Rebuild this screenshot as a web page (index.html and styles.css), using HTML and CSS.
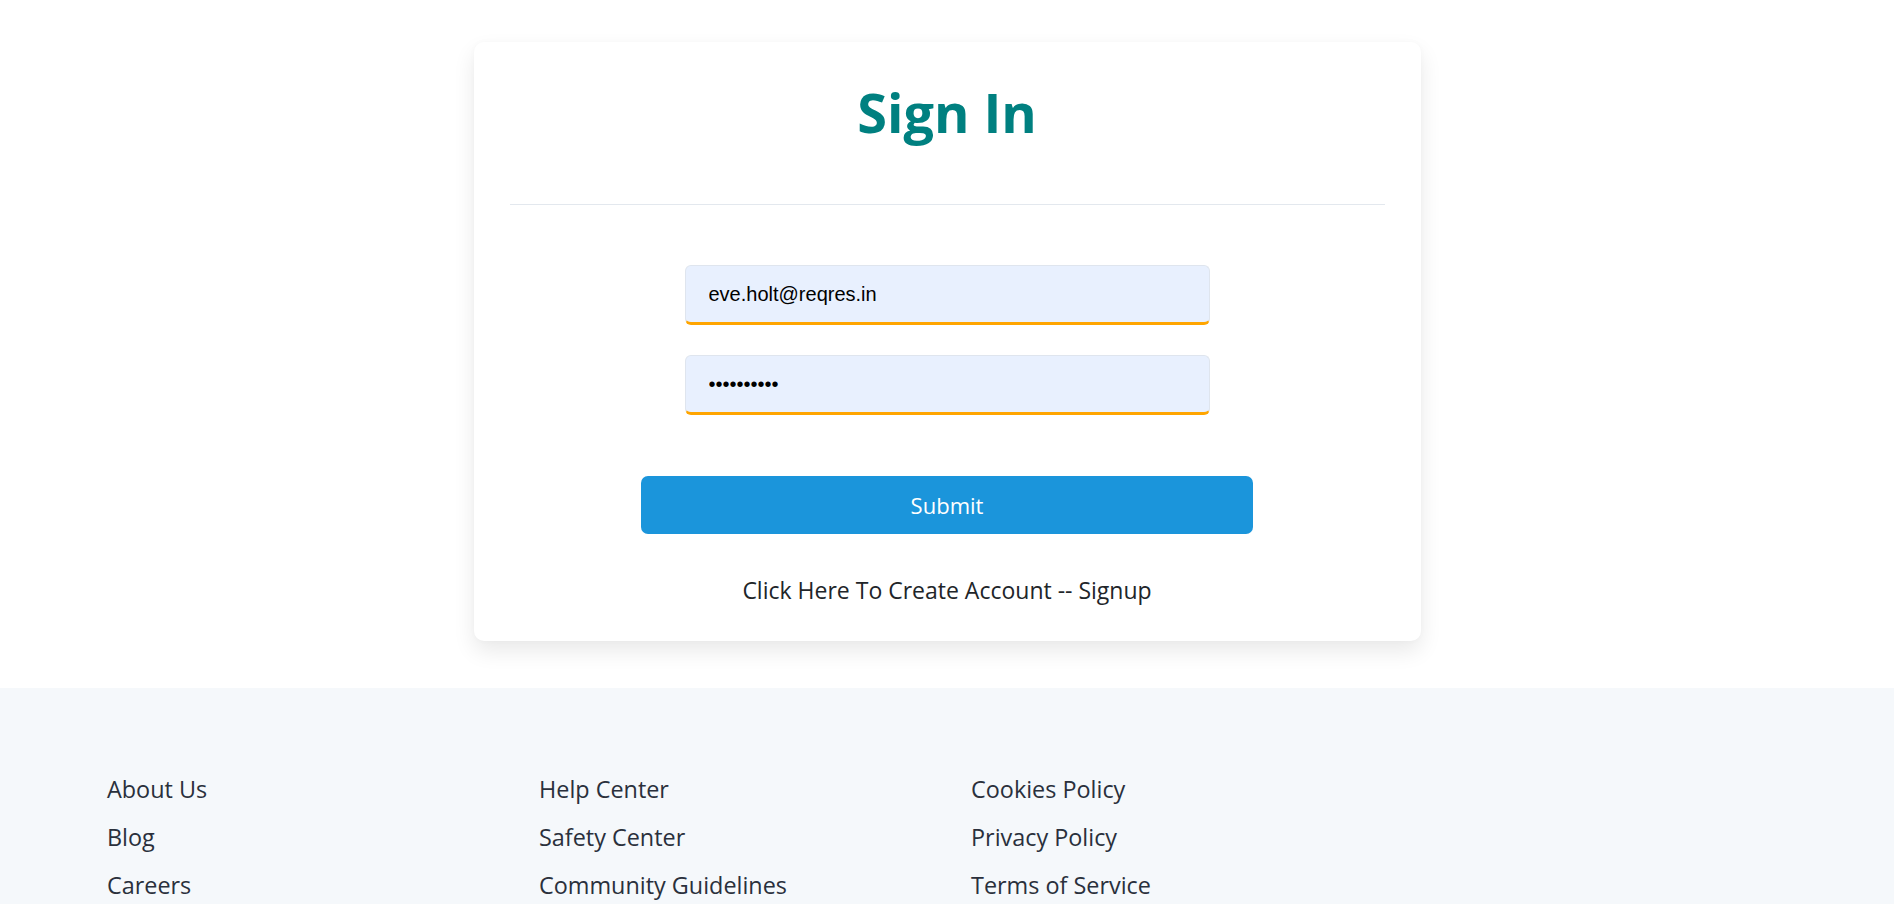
FILE: index.html
```html
<!DOCTYPE html>
<html lang="en">
<head>
<meta charset="utf-8">
<title>Sign In</title>
<link rel="stylesheet" href="styles.css">
</head>
<body>
<main class="page">
  <section class="card">
    <h1 class="card-title">Sign In</h1>
    <hr class="divider">
    <form class="form">
      <input class="field" type="email" value="eve.holt@reqres.in">
      <input class="field" type="password" value="cityslicka">
      <button class="submit" type="button">Submit</button>
    </form>
    <p class="signup">Click Here To Create Account -- Signup</p>
  </section>
</main>
<footer class="footer">
  <div class="footer-grid">
    <ul class="footer-col">
      <li>About Us</li>
      <li>Blog</li>
      <li>Careers</li>
    </ul>
    <ul class="footer-col">
      <li>Help Center</li>
      <li>Safety Center</li>
      <li>Community Guidelines</li>
    </ul>
    <ul class="footer-col">
      <li>Cookies Policy</li>
      <li>Privacy Policy</li>
      <li>Terms of Service</li>
    </ul>
    <div class="footer-col"></div>
  </div>
</footer>
</body>
</html>
```

FILE: styles.css
```css
* { box-sizing: border-box; }

html, body {
  margin: 0;
  padding: 0;
  background: #ffffff;
  font-family: "Segoe UI", "Open Sans", "Noto Sans", sans-serif;
  color: #212529;
}

.page {
  padding: 42px 0 47px;
}

.card {
  width: 50%;
  margin: 0 auto;
  background: #ffffff;
  border-radius: 10px;
  padding: 37px 36px 35px;
  box-shadow: 0 10px 22px rgba(0, 0, 0, 0.09), 0 0 6px rgba(0, 0, 0, 0.025);
}

.card-title {
  margin: 0;
  font-size: 54px;
  line-height: 67px;
  font-weight: 700;
  color: #008080;
  text-align: center;
}

.divider {
  margin: 58px 0 0;
  border: 0;
  border-top: 1px solid #e3e8ee;
  height: 0;
}

.form {
  display: flex;
  flex-direction: column;
  align-items: center;
  padding-top: 60px;
}

.field {
  width: 60%;
  height: 60px;
  margin: 0 0 30px;
  padding: 0 23px;
  border: 1px solid #dfe5ee;
  border-bottom: 3px solid #ffa500;
  border-radius: 6px;
  background: #e8f0fe;
  font-family: "Liberation Sans", Arial, sans-serif;
  font-size: 20px;
  color: #000;
  outline: none;
}

.submit {
  width: 70%;
  height: 58px;
  margin-top: 31px;
  border: 0;
  border-radius: 7px;
  background: #1b95db;
  color: #ffffff;
  font-family: inherit;
  font-size: 22px;
  cursor: pointer;
}

.signup {
  margin: 40px 0 0;
  text-align: center;
  font-size: 23px;
  line-height: 32px;
  color: #212529;
}

.footer {
  background: #f5f8fb;
  padding: 85px 83px 0;
  min-height: 300px;
}

.footer-grid {
  display: grid;
  grid-template-columns: repeat(4, 1fr);
}

.footer-col {
  list-style: none;
  margin: 0;
  padding: 0 24px;
  display: flex;
  flex-direction: column;
  gap: 16px;
}

.footer-col li {
  font-size: 23.4px;
  line-height: 32px;
  color: #2a303c;
}
```
